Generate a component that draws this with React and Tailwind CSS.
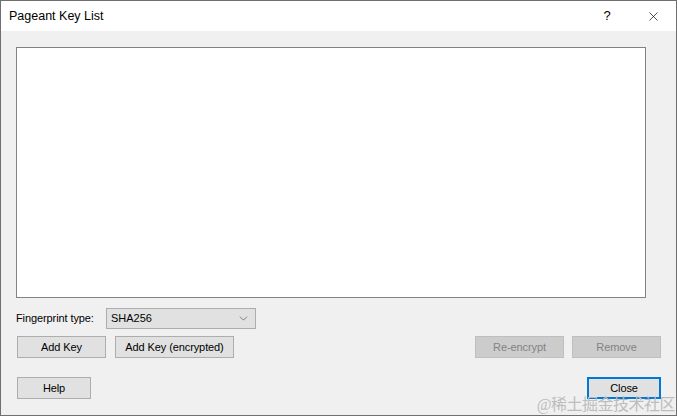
import { X, ChevronDown } from 'lucide-react';

const font = { fontFamily: '"Liberation Sans", Arial, sans-serif' };

function Btn({ children, className = '', disabled = false }) {
  return (
    <button
      className={
        'h-[22px] flex items-center justify-center text-[11px] tracking-[-0.1px] border ' +
        (disabled
          ? 'bg-[#cccccc] border-[#bfbfbf] text-[#838383] '
          : 'bg-[#e1e1e1] border-[#adadad] text-black ') +
        className
      }
    >
      {children}
    </button>
  );
}

export default function App() {
  return (
    <div
      className="relative w-[677px] h-[416px] flex flex-col border border-[#6f6f6f] bg-[#f0f0f0] overflow-hidden"
      style={font}
    >
      {/* Title bar */}
      <div className="h-[30px] shrink-0 bg-white flex items-center">
        <span className="pl-[8px] text-[12.5px] text-black flex-1">Pageant Key List</span>
        <div className="w-[46px] h-full flex items-center justify-center text-[13px] text-black">?</div>
        <div className="w-[46px] h-full flex items-center justify-center text-black">
          <X size={15} strokeWidth={1.1} />
        </div>
      </div>

      {/* Body */}
      <div className="flex-1 flex flex-col pl-[15px] pt-[16px]">
        <div className="w-[630px] h-[251px] bg-white border border-[#828282]" />

        <div className="flex items-center mt-[10px] h-[21px]">
          <span className="w-[90px] text-[11px] tracking-[-0.1px] text-black">Fingerprint type:</span>
          <div className="w-[150px] h-[21px] bg-[#e1e1e1] border border-[#adadad] flex items-center pl-[4px] pr-[5px] text-[11px] text-black">
            <span className="flex-1">SHA256</span>
            <ChevronDown size={13} strokeWidth={1.3} className="text-[#505050]" />
          </div>
        </div>

        <div className="flex mt-[7px] pl-[1px]">
          <Btn className="w-[89px]">Add Key</Btn>
          <Btn className="w-[119px] ml-[9px]">Add Key (encrypted)</Btn>
          <Btn disabled className="w-[89px] ml-[241px]">Re-encrypt</Btn>
          <Btn disabled className="w-[89px] ml-[8px]">Remove</Btn>
        </div>

        <div className="flex mt-[19px] pl-[1px]">
          <Btn className="w-[74px]">Help</Btn>
          <Btn className="w-[74px] ml-[496px] !border-[#0078d7] border-2">Close</Btn>
        </div>
      </div>

      {/* watermark */}
      <span
        className="absolute right-[1px] bottom-[2px] text-[16px] text-[#bdbdbd] leading-none tracking-[-0.5px]"
        style={{ fontFamily: '"Liberation Serif", "Noto Sans CJK SC", serif' }}
      >
        @稀土掘金技术社区
      </span>
    </div>
  );
}
